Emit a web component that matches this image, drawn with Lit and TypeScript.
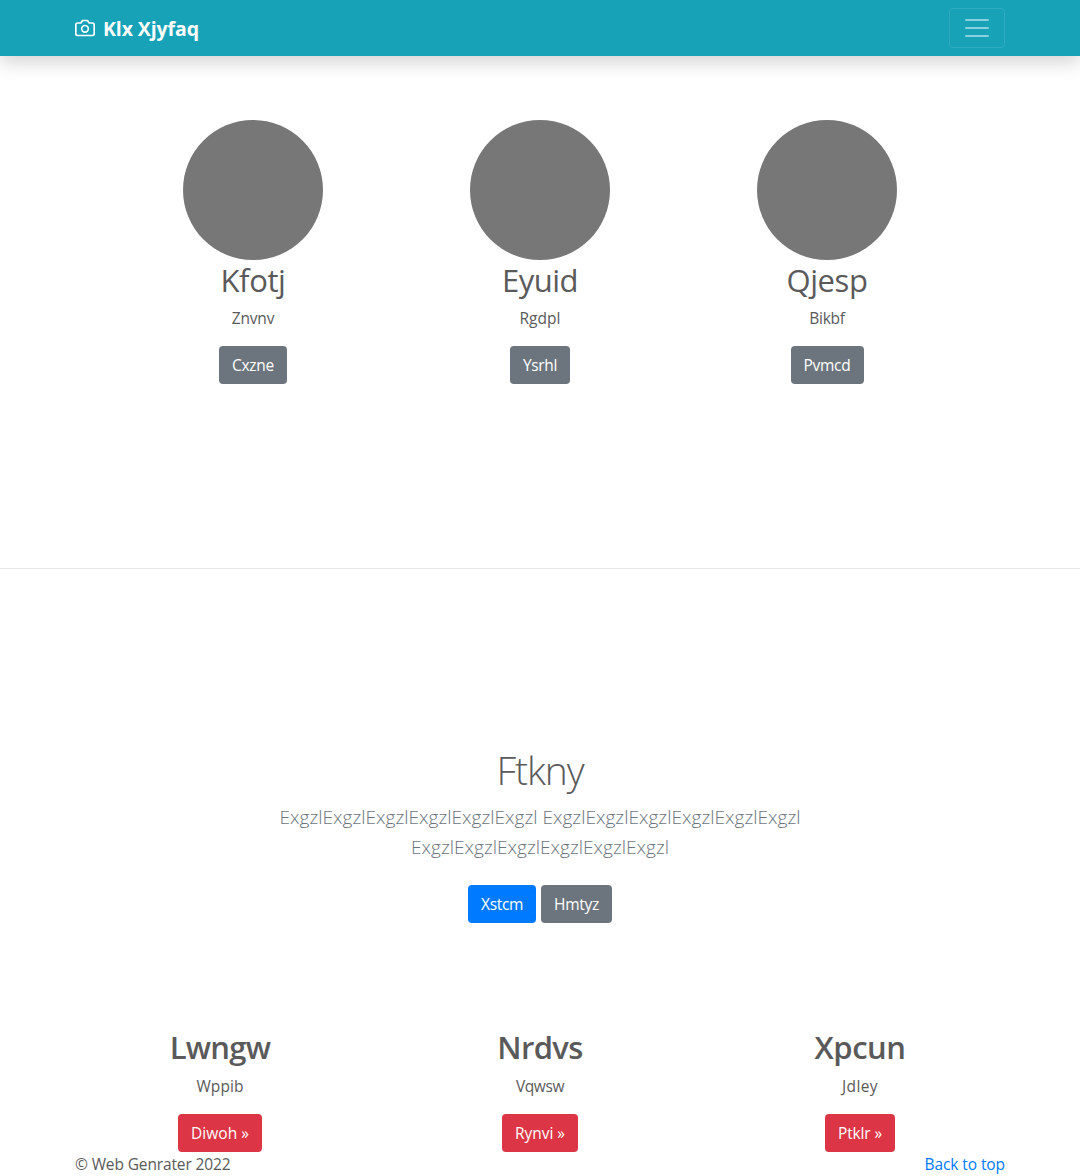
import { LitElement, html, css } from "lit";
import { customElement, property } from "lit/decorators.js";

/** A run of text whose tracking is adjusted so that it takes a given width. */
@customElement("tracked-text")
export class TrackedText extends LitElement {
  @property({ type: Number }) width = 0;
  @property() text = "";

  static styles = css`
    :host {
      display: inline-block;
      white-space: nowrap;
    }
  `;

  updated() {
    this.style.letterSpacing = "0px";
    const natural = this.getBoundingClientRect().width;
    const spacing = (this.width - natural) / this.text.length;
    this.style.letterSpacing = `${spacing.toFixed(4)}px`;
  }

  render() {
    return html`<span>${this.text}</span>`;
  }
}

type Run = [text: string, width: number];
interface Item {
  title: Run;
  body: Run;
  action: Run;
}

const features: Item[] = [
  { title: ["Kfotj", 65], body: ["Znvnv", 42.5], action: ["Cxzne", 42] },
  { title: ["Eyuid", 76], body: ["Rgdpl", 41], action: ["Ysrhl", 34] },
  { title: ["Qjesp", 81], body: ["Bikbf", 35.5], action: ["Pvmcd", 47] },
];

const cards: Item[] = [
  { title: ["Lwngw", 100.5], body: ["Wppib", 47], action: ["Diwoh »", 58] },
  { title: ["Nrdvs", 85.5], body: ["Vqwsw", 48], action: ["Rynvi »", 50] },
  { title: ["Xpcun", 91], body: ["Jdley", 36], action: ["Ptklr »", 44] },
];

const run = ([text, width]: Run) =>
  html`<tracked-text .text=${text} .width=${width}></tracked-text>`;

@customElement("app-root")
export class AppRoot extends LitElement {
  static styles = css`
    :host {
      display: block;
      box-sizing: border-box;
      height: 1176px;
      overflow: hidden;
      background: #fff;
      color: #5a5a5a;
      font-family: "Open Sans", "Noto Sans", sans-serif;
      font-size: 15.5px;
      line-height: 24px;
    }
    *,
    *::before,
    *::after {
      box-sizing: border-box;
    }
    h1,
    h2,
    p {
      margin: 0;
    }
    a {
      color: #007bff;
      text-decoration: none;
    }
    .navbar {
      height: 56px;
      padding: 0 75px;
      display: flex;
      align-items: center;
      justify-content: space-between;
      background: #17a2b8;
      box-shadow: 0 8px 16px rgba(0, 0, 0, 0.15);
    }
    .brand {
      display: flex;
      align-items: center;
      gap: 8px;
      padding-top: 1px;
      color: #fff;
      font-size: 19.5px;
      font-weight: 700;
      line-height: 30px;
    }
    .camera {
      display: block;
      width: 20px;
      height: 20px;
      margin-bottom: 1px;
    }
    .toggler {
      width: 56px;
      height: 40px;
      padding: 4px 12px;
      border: 1px solid rgba(255, 255, 255, 0.1);
      border-radius: 4px;
      background: transparent;
    }
    .bars {
      display: block;
      width: 30px;
      height: 30px;
    }
    .features {
      display: grid;
      grid-template-columns: repeat(3, 1fr);
      width: 861px;
      margin: 64px auto 0;
      text-align: center;
    }
    .disc {
      display: block;
      width: 140px;
      height: 140px;
      margin: 0 auto;
      border-radius: 50%;
      background: #777;
    }
    .title {
      height: 38.4px;
      margin-bottom: 8px;
      padding-top: 1px;
      font-size: 31px;
      font-weight: 400;
      line-height: 38.4px;
    }
    .cards .title {
      padding-top: 0;
      font-weight: 600;
    }
    .body {
      height: 24px;
      margin-bottom: 16px;
    }
    .btn {
      display: inline-block;
      height: 38px;
      padding: 7px 13px;
      border-radius: 4px;
      color: #fff;
      vertical-align: top;
    }
    .primary {
      background: #007bff;
    }
    .secondary {
      background: #6c757d;
    }
    .danger {
      background: #dc3545;
    }
    .rule {
      height: 1px;
      margin-top: 183.6px;
      background: rgba(0, 0, 0, 0.1);
    }
    .hero {
      padding-top: 177px;
      text-align: center;
    }
    .headline {
      height: 48px;
      margin-bottom: 8px;
      font-size: 39px;
      font-weight: 300;
      line-height: 48px;
    }
    .lead {
      color: #6c757d;
      font-size: 19px;
      font-weight: 300;
      line-height: 30px;
    }
    .line {
      height: 30px;
    }
    .actions {
      display: flex;
      justify-content: center;
      gap: 5px;
      margin-top: 23px;
    }
    .cards {
      display: grid;
      grid-template-columns: repeat(3, 1fr);
      width: 960px;
      margin: 104.6px auto 0;
      text-align: center;
    }
    .footer {
      display: flex;
      justify-content: space-between;
      height: 24px;
      padding: 0 75px;
    }
  `;

  private item(item: Item, kind: string, disc: boolean) {
    return html`<div>
      ${disc ? html`<span class="disc"></span>` : null}
      <h2 class="title">${run(item.title)}</h2>
      <p class="body">${run(item.body)}</p>
      <a class="btn ${kind}">${run(item.action)}</a>
    </div>`;
  }

  render() {
    return html`
      <header class="navbar">
        <a class="brand">
          <svg
            class="camera"
            viewBox="0 0 24 24"
            fill="none"
            stroke="#fff"
            stroke-width="2"
            stroke-linecap="round"
            stroke-linejoin="round"
          >
            <path
              d="M23 19a2 2 0 0 1-2 2H3a2 2 0 0 1-2-2V8a2 2 0 0 1 2-2h4l2-3h6l2 3h4a2 2 0 0 1 2 2z"
            />
            <circle cx="12" cy="13" r="4" />
          </svg>
          ${run(["Klx Xjyfaq", 96])}
        </a>
        <button class="toggler" aria-label="Menu">
          <svg
            class="bars"
            viewBox="0 0 30 30"
            stroke="rgba(255,255,255,.5)"
            stroke-width="2"
            stroke-linecap="round"
            stroke-miterlimit="10"
          >
            <path d="M4 7h22M4 15h22M4 23h22" />
          </svg>
        </button>
      </header>
      <main>
        <section class="features">
          ${features.map((f) => this.item(f, "secondary", true))}
        </section>
        <div class="rule"></div>
        <section class="hero">
          <h1 class="headline">${run(["Ftkny", 87])}</h1>
          <div class="lead">
            <div class="line">
              ${run(["ExgzlExgzlExgzlExgzlExgzlExgzl ExgzlExgzlExgzlExgzlExgzlExgzl", 521])}
            </div>
            <div class="line">${run(["ExgzlExgzlExgzlExgzlExgzlExgzl", 258])}</div>
          </div>
          <div class="actions">
            <a class="btn primary">${run(["Xstcm", 42])}</a>
            <a class="btn secondary">${run(["Hmtyz", 45])}</a>
          </div>
        </section>
        <section class="cards">
          ${cards.map((c) => this.item(c, "danger", false))}
        </section>
      </main>
      <footer class="footer">
        ${run(["© Web Genrater 2022", 155.5])}
        <a>${run(["Back to top", 80.5])}</a>
      </footer>
    `;
  }
}
